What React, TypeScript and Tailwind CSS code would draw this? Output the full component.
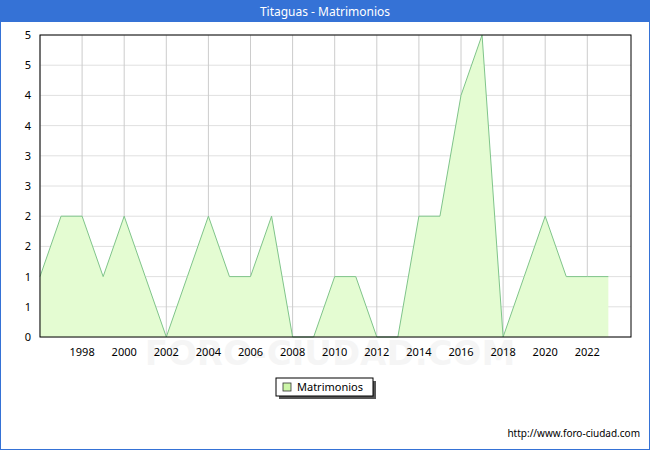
const data=[1,2,2,1,2,1,0,1,2,1,1,2,0,0,1,1,0,0,2,2,4,5,0,1,2,1,1,1];
const X0=40,X1=631,Y0=35,Y1=337;
const xs=(i:number)=>X0+i*21.05;
const ys=(v:number)=>Y1-v*60.4;
export default function App(){
  const pts=data.map((v,i)=>`${xs(i)},${ys(v)}`).join(" ");
  const area=`${xs(0)},${Y1} ${pts} ${xs(27)},${Y1}`;
  const ylabels=["0","1","1","2","2","3","3","4","4","5","5"];
  return(
  <div className="w-[650px] h-[450px] bg-white border border-[#3572d6] flex flex-col font-['DejaVu_Sans',sans-serif]">
    <div className="h-[21px] bg-[#3572d6] text-white text-[12px] flex items-center justify-center">Titaguas - Matrimonios</div>
    <div className="relative flex-1">
      <svg width="650" height="450" className="absolute -top-[22px] -left-px">
        <text x="330" y="365" textAnchor="middle" fontSize="34" fill="#000" opacity="0.035" fontWeight="bold" fontFamily="DejaVu Sans">FORO-CIUDAD.COM</text>
        {Array.from({length:11},(_,k)=>{const y=Y1-k*30.2;return <g key={k}><line x1={X0} x2={X1} y1={y} y2={y} stroke="#e0e0e0"/><text x={31} y={y+4} textAnchor="end" fontSize="11" fill="#000">{ylabels[k]}</text></g>})}
        {Array.from({length:14},(_,k)=>{const x=xs(k*2);return <g key={k}><line x1={x} x2={x} y1={Y0} y2={Y1} stroke="#cccccc"/>{k>0&&<text x={x} y={356} textAnchor="middle" fontSize="11">{1996+k*2}</text>}</g>})}
        <polygon points={area} fill="#e4fcd2"/>
        <polyline points={pts} fill="none" stroke="#7fc48a" strokeWidth="1"/>
        <rect x={X0} y={Y0} width={X1-X0} height={Y1-Y0} fill="none" stroke="#000"/>
        <rect x="279" y="381" width="97" height="18" fill="#555"/>
        <rect x="276" y="378" width="97" height="18" fill="#fff" stroke="#000"/>
        <rect x="283" y="383" width="8" height="8" fill="#ccf5a8" stroke="#333" strokeWidth="0.8"/>
        <text x="297" y="391" fontSize="11">Matrimonios</text>
        <text x="640" y="437" textAnchor="end" fontSize="10">http://www.foro-ciudad.com</text>
      </svg>
    </div>
  </div>);
}
